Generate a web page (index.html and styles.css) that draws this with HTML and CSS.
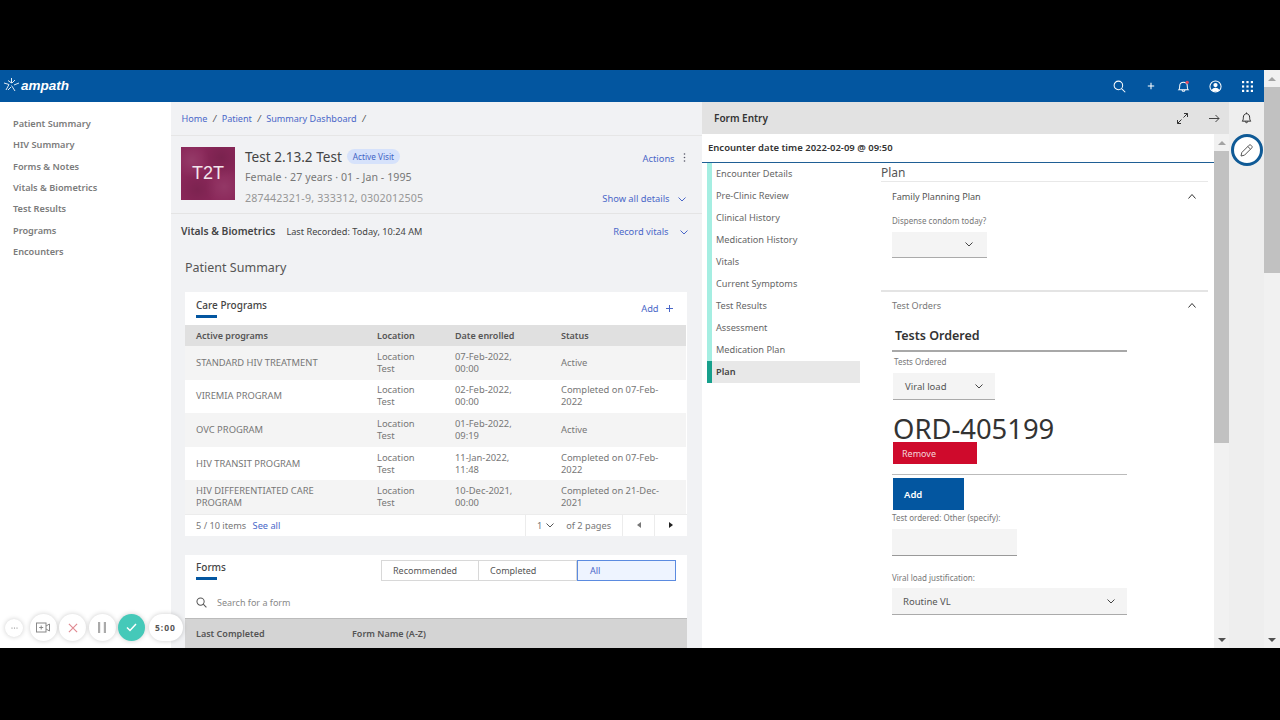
FILE: index.html
```html
<!DOCTYPE html>
<html lang="en">
<head>
<meta charset="utf-8">
<title>Form Entry</title>
<link rel="stylesheet" href="styles.css">
</head>
<body>
<div class="letterbox"></div>
<div class="app">
  <div class="app-main">
    <header class="topbar">
      <div class="logo">
        <svg width="17" height="16" viewBox="0 0 17 16" fill="none" stroke="#dfe9f3" stroke-width="1"><path d="M8.500 1v5M8.500 6 5 3.500M1 6l5 1.500L3 13M8.500 8.500 12 14M16 6l-5 2M12 3 9 6M5 13l3-3"/></svg>
        <span class="logo-text">ampath</span>
      </div>
      <div class="topbar-icons">
        <span class="tb-ic"><svg width="13" height="13" viewBox="0 0 14 14" fill="none" stroke="#fff" stroke-width="1.100"><circle cx="5.800" cy="5.800" r="4.600"/><path d="m9.200 9.200 4 4"/></svg></span>
        <span class="tb-ic"><svg width="8" height="8" viewBox="0 0 10 10" stroke="#fff" stroke-width="1.300"><path d="M5 1v8M1 5h8"/></svg></span>
        <span class="tb-ic"><svg width="13" height="13" viewBox="0 0 14 14" fill="none" stroke="#fff" stroke-width="1.100"><path d="M2 10.500c1-1 1-2 1-4.500 0-2 1.700-3.500 4-3.500s4 1.500 4 3.500c0 2.500 0 3.500 1 4.500zM5.500 11c0 1.500 3 1.500 3 0"/><circle cx="11" cy="2.500" r="1.800" fill="#e0485c" stroke="none"/></svg></span>
        <span class="tb-ic"><svg width="13" height="13" viewBox="0 0 14 14"><circle cx="7" cy="7" r="6" fill="none" stroke="#fff" stroke-width="1.100"/><circle cx="7" cy="5.500" r="2.300" fill="#fff"/><path d="M2.800 11c1-2 2.500-2.700 4.200-2.700s3.200.7 4.200 2.700c-2 2-6.400 2-8.400 0z" fill="#fff"/></svg></span>
        <span class="tb-ic"><svg width="11" height="11" viewBox="0 0 12 12" fill="#fff"><rect x="0" y="0" width="2.400" height="2.400"/><rect x="4.800" y="0" width="2.400" height="2.400"/><rect x="9.600" y="0" width="2.400" height="2.400"/><rect x="0" y="4.800" width="2.400" height="2.400"/><rect x="4.800" y="4.800" width="2.400" height="2.400"/><rect x="9.600" y="4.800" width="2.400" height="2.400"/><rect x="0" y="9.600" width="2.400" height="2.400"/><rect x="4.800" y="9.600" width="2.400" height="2.400"/><rect x="9.600" y="9.600" width="2.400" height="2.400"/></svg></span>
      </div>
    </header>
    <div class="workspace">
      <nav class="sidenav">
        <a>Patient Summary</a><a>HIV Summary</a><a>Forms &amp; Notes</a><a>Vitals &amp; Biometrics</a><a>Test Results</a><a>Programs</a><a>Encounters</a>
      </nav>
      <main class="dashboard">
        <div class="breadcrumb"><a>Home</a><i>/</i><a>Patient</a><i>/</i><a>Summary Dashboard</a><i>/</i></div>
        <section class="patient">
          <div class="avatar">T2T</div>
          <div class="patient-info">
            <div class="patient-name"><span>Test 2.13.2 Test</span><em class="tag">Active Visit</em></div>
            <div class="patient-demo">Female · 27 years · 01 - Jan - 1995</div>
            <div class="patient-ids">287442321-9, 333312, 0302012505</div>
          </div>
          <div class="patient-actions">
            <a class="link">Actions <svg class="ic-gap" width="3" height="9" viewBox="0 0 3 9" fill="#556"><circle cx="1.500" cy="1" r=".8"/><circle cx="1.500" cy="4.500" r=".8"/><circle cx="1.500" cy="8" r=".8"/></svg></a>
            <a class="link">Show all details <svg class="ic-gap" width="8" height="5" viewBox="0 0 8 5" fill="none" stroke="#4a67c8"><path d="m.5.5 3.500 3.500L7.500.5"/></svg></a>
          </div>
        </section>
        <section class="vitals">
          <strong>Vitals &amp; Biometrics</strong>
          <span>Last Recorded: Today, 10:24 AM</span>
          <a class="link">Record vitals <svg class="ic-gap-l" width="8" height="5" viewBox="0 0 8 5" fill="none" stroke="#4a67c8"><path d="m.5.5 3.500 3.500L7.500.5"/></svg></a>
        </section>
        <h1 class="page-title">Patient Summary</h1>
        <section class="card programs">
          <div class="card-head">
            <h2 class="card-title">Care Programs</h2>
            <a class="link">Add <svg class="ic-gap-m" width="7" height="7" viewBox="0 0 7 7" stroke="#4a67c8"><path d="M3.500 0v7M0 3.500h7"/></svg></a>
          </div>
          <table class="grid">
            <colgroup><col class="c1"><col class="c2"><col class="c3"><col class="c4"></colgroup>
            <thead><tr><th>Active programs</th><th>Location</th><th>Date enrolled</th><th>Status</th></tr></thead>
            <tbody>
              <tr><td>STANDARD HIV TREATMENT</td><td>Location Test</td><td>07-Feb-2022, 00:00</td><td>Active</td></tr>
              <tr><td>VIREMIA PROGRAM</td><td>Location Test</td><td>02-Feb-2022, 00:00</td><td>Completed on 07-Feb-2022</td></tr>
              <tr><td>OVC PROGRAM</td><td>Location Test</td><td>01-Feb-2022, 09:19</td><td>Active</td></tr>
              <tr><td>HIV TRANSIT PROGRAM</td><td>Location Test</td><td>11-Jan-2022, 11:48</td><td>Completed on 07-Feb-2022</td></tr>
              <tr><td>HIV DIFFERENTIATED CARE PROGRAM</td><td>Location Test</td><td>10-Dec-2021, 00:00</td><td>Completed on 21-Dec-2021</td></tr>
            </tbody>
          </table>
          <div class="pager">
            <div class="pager-count">5 / 10 items <a class="link">See all</a></div>
            <div class="pager-pages"><span>1</span><svg width="8" height="5" viewBox="0 0 8 5" fill="none" stroke="#555"><path d="m.5.5 3.500 3.500L7.500.5"/></svg><span class="pager-of">of 2 pages</span></div>
            <div class="pager-btn"><svg width="4" height="6" viewBox="0 0 4 6" fill="#777"><path d="M4 0v6L0 3z"/></svg></div>
            <div class="pager-btn"><svg width="4" height="6" viewBox="0 0 4 6" fill="#222"><path d="M0 0v6l4-3z"/></svg></div>
          </div>
        </section>
        <section class="card forms">
          <div class="forms-head">
            <h2 class="card-title">Forms</h2>
            <div class="toggle"><span>Recommended</span><span>Completed</span><span class="on">All</span></div>
          </div>
          <div class="form-search">
            <svg width="11" height="11" viewBox="0 0 14 14" fill="none" stroke="#555" stroke-width="1.300"><circle cx="5.800" cy="5.800" r="4.600"/><path d="m9.200 9.200 4 4"/></svg>
            <span>Search for a form</span>
          </div>
          <div class="forms-cols"><span>Last Completed</span><span>Form Name (A-Z)</span></div>
        </section>
      </main>
      <aside class="entry">
        <header class="entry-head">
          <strong>Form Entry</strong>
          <div class="entry-tools">
            <svg width="11" height="11" viewBox="0 0 11 11" fill="none" stroke="#333"><path d="M6.500 4.500 10.500.5M7 .5h3.500V4M4.500 6.500l-4 4M.5 7v3.500H4"/></svg>
            <svg width="11" height="9" viewBox="0 0 11 9" fill="none" stroke="#444"><path d="M0 4.500h10M6.500 1l3.500 3.500L6.500 8"/></svg>
          </div>
        </header>
        <div class="entry-body">
          <div class="entry-scroll">
            <div class="encounter">Encounter date time 2022-02-09 @ 09:50</div>
            <div class="form-layout">
              <ul class="pages">
                <li>Encounter Details</li><li>Pre-Clinic Review</li><li>Clinical History</li><li>Medication History</li><li>Vitals</li><li>Current Symptoms</li><li>Test Results</li><li>Assessment</li><li>Medication Plan</li><li class="active">Plan</li>
              </ul>
              <div class="form-page">
                <h2 class="form-page-title">Plan</h2>
                <section class="acc acc-first">
                  <div class="acc-head dark"><span>Family Planning Plan</span><svg width="8" height="5" viewBox="0 0 8 5" fill="none" stroke="#333"><path d="m.5 4.500 3.500-4 3.500 4"/></svg></div>
                  <label class="lbl lbl-condom">Dispense condom today?</label>
                  <div class="select sel-condom"><svg width="8" height="5" viewBox="0 0 8 5" fill="none" stroke="#444"><path d="m.5.5 3.500 3.500L7.500.5"/></svg></div>
                </section>
                <section class="acc acc-second">
                  <div class="acc-head acc-head-s"><span>Test Orders</span><svg width="8" height="5" viewBox="0 0 8 5" fill="none" stroke="#333"><path d="m.5 4.500 3.500-4 3.500 4"/></svg></div>
                  <div class="orders">
                    <h3 class="orders-title">Tests Ordered</h3>
                    <label class="lbl lbl-tests">Tests Ordered</label>
                    <div class="select sel-viral"><span>Viral load</span><svg width="8" height="5" viewBox="0 0 8 5" fill="none" stroke="#444"><path d="m.5.5 3.500 3.500L7.500.5"/></svg></div>
                    <div class="ord">ORD-405199</div>
                    <button class="btn-remove">Remove</button>
                    <div class="btn-rule"><button class="btn-add">Add</button></div>
                    <label class="lbl lbl-other">Test ordered: Other (specify):</label>
                    <div class="text-input"></div>
                    <label class="lbl lbl-just">Viral load justification:</label>
                    <div class="select sel-just"><span>Routine VL</span><svg width="8" height="5" viewBox="0 0 8 5" fill="none" stroke="#444"><path d="m.5.5 3.500 3.500L7.500.5"/></svg></div>
                  </div>
                </section>
              </div>
            </div>
          </div>
          <div class="scrollbar panel-bar"><b class="arrow up"></b><div class="thumb"></div><b class="arrow down"></b></div>
        </div>
      </aside>
      <aside class="rail">
        <svg width="11" height="12" viewBox="0 0 14 15" fill="none" stroke="#222" stroke-width="1.200"><path d="M1.500 11.500c1-1 1.500-2 1.500-5 0-2.500 1.700-4.500 4-4.500s4 2 4 4.500c0 3 .5 4 1.500 5zM5.500 12c0 2 3 2 3 0M7 .5V2"/></svg>
        <div class="pen"><svg width="13" height="13" viewBox="0 0 13 13" fill="none" stroke="#555"><path d="M1 12l.8-3.500L9 1.300c.6-.6 1.500-.6 2.100 0l.6.6c.6.6.6 1.500 0 2.100L4.500 11.200zM7.800 2.500l2.700 2.700"/></svg></div>
      </aside>
    </div>
  </div>
  <div class="scrollbar page-bar"><b class="arrow up"></b><div class="thumb"></div><b class="arrow down"></b></div>
  <div class="recorder">
    <span class="rec rec-more"><svg width="7" height="2" viewBox="0 0 7 2" fill="#777"><circle cx="1" cy="1" r=".6"/><circle cx="3.500" cy="1" r=".6"/><circle cx="6" cy="1" r=".6"/></svg></span>
    <span class="rec"><svg width="14" height="11" viewBox="0 0 14 11" fill="none" stroke="#888"><rect x=".5" y="1" width="9.500" height="9"/><path d="M10 4l3.500-2v7L10 7M5.200 3.500v4M3.200 5.500h4"/></svg></span>
    <span class="rec"><svg width="10" height="10" viewBox="0 0 11 11" stroke="#e08a92" stroke-width="1.300"><path d="m1 1 9 9M10 1l-9 9"/></svg></span>
    <span class="rec"><svg width="8" height="11" viewBox="0 0 8 11" fill="#aaa"><rect x="0" width="2.200" height="11"/><rect x="5.800" width="2.200" height="11"/></svg></span>
    <span class="rec rec-ok"><svg width="11" height="9" viewBox="0 0 11 9" fill="none" stroke="#fff" stroke-width="1.500"><path d="m1 4.500 3 3L10 1"/></svg></span>
    <span class="rec rec-time">5:00</span>
  </div>
</div>
<div class="letterbox letterbox-bottom"></div>
</body>
</html>
```
FILE: styles.css
```css
* { box-sizing: border-box; }
html, body { margin: 0; height: 720px; overflow: hidden; background: #000; }
body { font-family: "Noto Sans", "Liberation Sans", sans-serif; font-size: 9.5px; color: #555; }
h1, h2, h3, ul { margin: 0; padding: 0; font-weight: 400; }
button { font-family: inherit; border: 0; padding: 0; }

.letterbox { height: 70px; background: #000; }
.letterbox-bottom { height: 72px; }
.app { position: relative; height: 578px; display: flex; overflow: hidden; background: #fff; }
.app-main { width: 1264px; display: flex; flex-direction: column; }

.topbar { height: 32px; flex: none; background: #0356a0; display: flex; align-items: center; justify-content: space-between; padding: 0 1px 0 3px; }
.logo { display: flex; align-items: center; gap: 1px; margin-top: -2px; }
.logo-text { color: #fff; font-family: "Liberation Sans", sans-serif; font-weight: 700; font-style: italic; font-size: 13.5px; }
.topbar-icons { display: flex; align-items: center; }
.tb-ic { width: 32px; display: flex; justify-content: center; }

.workspace { flex: 1; display: flex; min-height: 0; }
.sidenav { width: 171px; flex: none; background: #fff; padding: 11px 0 0 13px; display: flex; flex-direction: column; }
.sidenav a { height: 21.33px; line-height: 21.33px; font-size: 9.2px; font-weight: 600; color: #7b7b7b; }

.dashboard { width: 531px; flex: none; background: #f1f2f4; overflow: hidden; }
.breadcrumb { height: 34px; display: flex; align-items: center; gap: 5.5px; padding-left: 10.5px; border-bottom: 1px solid #e6e6e6; color: #555; font-size: 9.1px; }
.breadcrumb a { color: #4a67c8; }
.breadcrumb i { font-style: italic; }
.patient { height: 78px; display: flex; padding: 11px 16px 0 10px; border-bottom: 1px solid #e4e4e4; }
.avatar { width: 54px; height: 53px; flex: none; color: #f3e6ec; font-family: "Liberation Sans", sans-serif; font-size: 18px; display: flex; align-items: center; justify-content: center;
  background-color: #8a2759;
  background-image: radial-gradient(circle at 20% 25%, rgba(255,255,255,.09), transparent 30%), radial-gradient(circle at 75% 20%, rgba(0,0,0,.12), transparent 35%), radial-gradient(circle at 30% 80%, rgba(0,0,0,.1), transparent 35%), radial-gradient(circle at 80% 75%, rgba(255,255,255,.08), transparent 32%); }
.patient-info { flex: 1; padding: 0 0 0 10px; }
.patient-name { display: flex; align-items: center; gap: 5px; height: 19px; font-size: 13.6px; color: #444; }
.tag { font-style: normal; font-size: 8.2px; color: #3f62c4; background: #d6e2fb; border-radius: 8px; padding: 2px 6px; }
.patient-demo { font-size: 10.6px; letter-spacing: .08px; color: #777; margin-top: 4px; line-height: 15px; }
.patient-ids { font-size: 10.7px; letter-spacing: .15px; color: #979797; margin-top: 6px; line-height: 15px; }
.patient-actions { display: flex; flex-direction: column; align-items: flex-end; gap: 27px; padding-top: 5px; }
.link { color: #4a67c8; font-size: 9.3px; }
.patient-actions .link:first-child .ic-gap { margin-right: 0; }
.patient-actions .link:first-child { margin-right: 0; }
.ic-gap { margin-left: 6px; }
.ic-gap-l { margin-left: 9px; }
.ic-gap-m { margin-left: 5px; }
.vitals { height: 34px; display: flex; align-items: center; padding: 0 14px 0 10px; }
.vitals strong { font-size: 10.3px; font-weight: 600; color: #444; }
.vitals span { margin-left: 11px; font-size: 9.2px; color: #444; }
.vitals .link { margin-left: auto; }
.page-title { padding: 11px 0 0 14px; height: 44px; font-size: 12.5px; color: #555; line-height: 18px; }

.card { margin: 0 15px 0 14px; background: #fff; }
.programs { height: 244px; }
.card-head { height: 33px; display: flex; justify-content: space-between; padding: 10px 14px 0 11px; }
.card-title { font-size: 10px; font-weight: 500; color: #444; line-height: 13px; height: 13px; margin-top: -3px; }
.card-title::after { content: ""; display: block; width: 21px; height: 3px; margin-top: 3px; background: #0356a0; }
.grid { width: 501px; border-collapse: collapse; table-layout: fixed; font-size: 9.4px; }
.c1 { width: 192px; } .c2 { width: 78px; } .c3 { width: 106px; } .c4 { width: 125px; }
.grid th { height: 21px; padding: 0 11px; background: #e0e0e0; text-align: left; font-size: 9px; font-weight: 600; color: #555; }
.grid th:nth-child(n+2), .grid td:nth-child(n+2) { padding-left: 0; padding-right: 16px; }
.grid td:first-child { padding-right: 30px; }
.grid td:nth-child(2), .grid td:nth-child(3) { padding-right: 30px; }
.grid td { height: 33.6px; padding: 0 11px; line-height: 12px; color: #777; }
.grid tbody tr:nth-child(odd) { background: #f4f4f4; }
.pager { height: 22px; display: flex; align-items: stretch; border-top: 1px solid #ececec; font-size: 9.2px; color: #777; }
.pager-count { width: 340px; padding-left: 11px; line-height: 21px; }
.pager-count .link { margin-left: 4px; font-size: 9.2px; }
.pager-pages { width: 97px; display: flex; align-items: center; gap: 4px; padding-left: 11px; border-left: 1px solid #ececec; }
.pager-of { margin-left: 8px; }
.pager-btn { width: 32px; display: flex; align-items: center; justify-content: center; border-left: 1px solid #ececec; }

.forms { margin-top: 19px; height: 93px; }
.forms-head { height: 35px; display: flex; justify-content: space-between; padding: 6px 11px 0 11px; }
.forms .card-title { margin-top: 0; }
.toggle { display: flex; height: 21px; margin-top: -1px; font-size: 9px; color: #555; }
.toggle span { width: 98px; padding-left: 11px; line-height: 19px; border: 1px solid #d8d8d8; border-left-width: 0; }
.toggle span:first-child { border-left-width: 1px; }
.toggle .on { width: 99px; border: 1px solid #5b8be0; background: #eef4ff; color: #4a67c8; padding-left: 12px; }
.form-search { height: 28px; display: flex; align-items: center; gap: 10px; padding: 0 0 4px 11px; font-size: 9px; color: #888; }
.forms-cols { height: 30px; background: #d4d4d4; border-top: 1px solid #bbb; display: flex; align-items: center; padding-left: 11px; font-size: 9px; font-weight: 600; color: #555; }
.forms-cols span:first-child { width: 156px; }

.entry { width: 528px; flex: none; display: flex; flex-direction: column; background: #fff; }
.entry-head { height: 32px; flex: none; background: #e2e2e2; display: flex; align-items: center; justify-content: space-between; padding: 0 10px 0 12px; }
.entry-head strong { font-size: 10px; font-weight: 600; color: #333; }
.entry-tools { display: flex; align-items: center; gap: 21px; }
.entry-body { flex: 1; min-height: 0; display: flex; }
.entry-scroll { width: 512px; flex: none; overflow: hidden; }
.encounter { height: 29px; line-height: 28px; padding-left: 6px; font-size: 9.5px; font-weight: 600; color: #333; border-bottom: 1px solid #1f5f95; }
.form-layout { display: flex; padding: 0 6px 0 5px; }
.pages { width: 153px; flex: none; list-style: none; }
.pages li { height: 22px; line-height: 22px; padding-left: 4px; border-left: 5px solid #a5eee2; font-size: 9.2px; color: #666; }
.pages li.active { background: #e8e8e8; border-left-color: #17a08c; font-weight: 600; color: #444; }
.form-page { flex: 1; min-width: 0; margin-left: 21px; }
.form-page-title { height: 19px; line-height: 20px; font-size: 12px; color: #555; border-bottom: 1px solid #e8e8e8; }
.acc-first { height: 110px; border-bottom: 2px solid #e4e4e4; }
.acc-head { height: 28px; display: flex; align-items: center; justify-content: space-between; padding: 0 12px 0 11px; font-size: 9.1px; color: #777; }
.acc-head-s { height: 27px; }
.acc-head.dark { color: #555; }
.lbl { display: block; font-size: 8px; color: #777; padding-left: 11px; line-height: 11px; }
.lbl-condom { margin-top: 5px; }
.select { background: #f4f4f4; border-bottom: 1px solid #aaa; display: flex; align-items: center; justify-content: space-between; font-size: 9.5px; color: #555; }
.sel-condom { width: 95px; height: 26px; margin: 6px 0 0 11px; padding-left: 73px; }
.orders { padding: 0 0 0 11px; width: 246px; }
.orders-title { font-size: 12.5px; font-weight: 600; color: #333; line-height: 17px; box-sizing: content-box; height: 17px; padding: 8px 0 6px 3px; border-bottom: 2px solid #a8a8a8; }
.lbl-tests { padding-left: 2px; margin-top: 4px; }
.sel-viral { width: 102px; height: 27px; margin: 6px 0 0 1px; padding: 0 12px; }
.ord { font-size: 27.4px; line-height: 30px; height: 26px; color: #333; margin-top: 14px; padding-left: 1px; }
.btn-remove { display: block; width: 84px; height: 22px; margin: 2px 0 0 1px; background: #cf0a2c; color: #f5d5da; font-size: 9px; text-align: left; padding-left: 9px; }
.btn-rule { margin-top: 10px; border-top: 1px solid #bbb; padding-top: 3px; }
.btn-add { display: block; width: 71px; height: 32px; margin-left: 1px; background: #0356a0; color: #fff; font-size: 9.5px; font-weight: 600; text-align: left; padding-left: 11px; }
.lbl-other { padding-left: 0; margin-top: 2px; }
.text-input { width: 125px; height: 27px; margin-top: 6px; background: #f4f4f4; border-bottom: 1px solid #999; }
.lbl-just { padding-left: 0; margin-top: 16px; }
.sel-just { height: 27px; margin-top: 5px; padding: 0 12px 0 11px; }

.scrollbar { display: flex; flex-direction: column; align-items: stretch; background: #f1f1f1; }
.panel-bar { width: 15px; flex: none; }
.page-bar { width: 16px; flex: none; }
.thumb { background: #c1c1c1; }
.panel-bar .thumb { height: 292px; }
.page-bar .thumb { height: 186px; }
.arrow { height: 17px; flex: none; display: flex; align-items: center; justify-content: center; }
.arrow::before { content: ""; border-left: 4px solid transparent; border-right: 4px solid transparent; }
.arrow.up::before { border-bottom: 4px solid #a3a3a3; }
.arrow.down { margin-top: auto; }
.arrow.down::before { border-top: 4px solid #505050; }

.rail { width: 35px; margin-left: -1px; flex: none; background: #eee; display: flex; flex-direction: column; align-items: center; padding-top: 10px; }
.pen { width: 32px; height: 32px; margin-top: 10px; border: 3px solid #0f5a96; border-radius: 50%; background: #fff; display: flex; align-items: center; justify-content: center; }

.recorder { position: absolute; left: 5px; top: 544px; display: flex; align-items: center; gap: 2.5px; }
.rec { width: 27px; height: 27px; border-radius: 50%; background: #fff; box-shadow: 0 0 5px rgba(0,0,0,.2); display: flex; align-items: center; justify-content: center; }
.rec-more { width: 18px; height: 18px; margin-right: 4px; }
.rec-ok { background: #45c9b9; }
.rec-time { width: 34px; margin-left: 1px; border-radius: 14px; font-size: 8.5px; font-weight: 700; letter-spacing: 1px; color: #555; }
```
